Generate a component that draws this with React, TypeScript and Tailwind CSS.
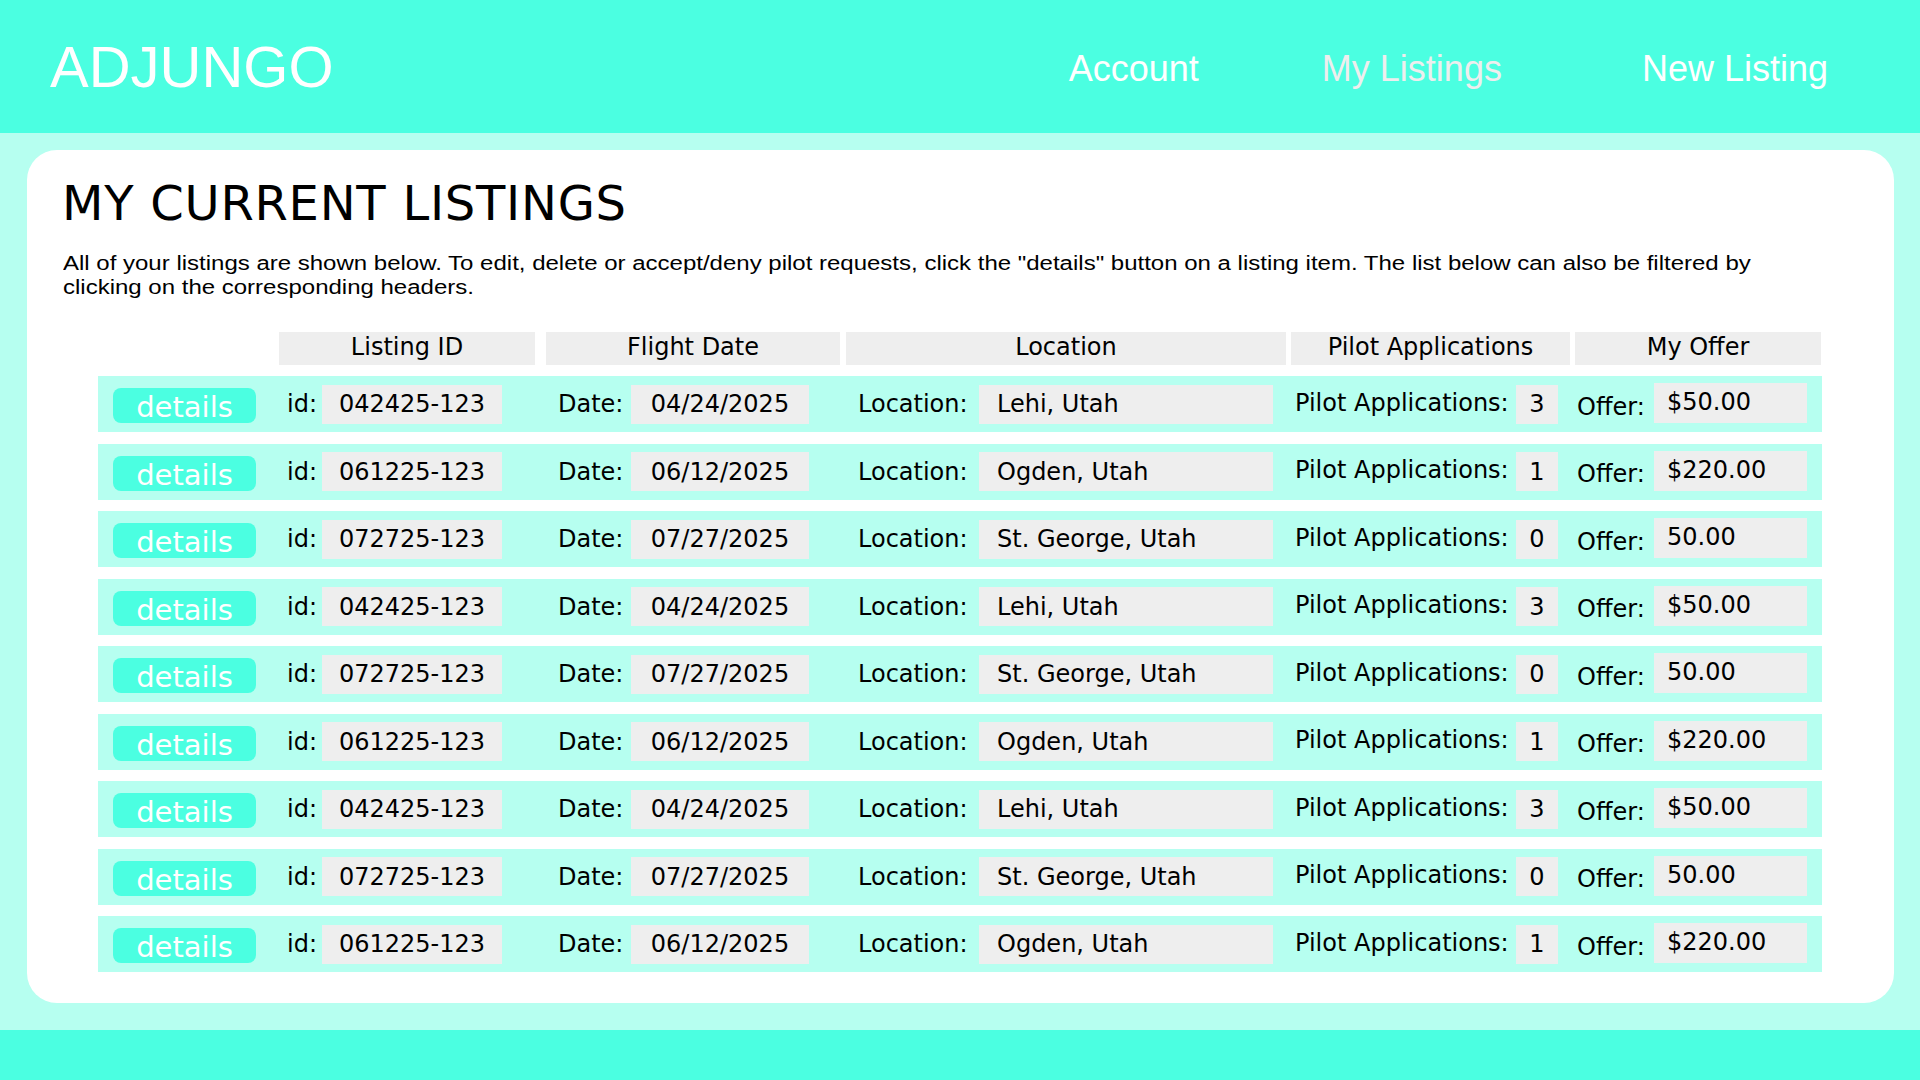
import React from "react";

type Row = { id: string; date: string; loc: string; apps: string; offer: string };

const A: Row = { id: "042425-123", date: "04/24/2025", loc: "Lehi, Utah", apps: "3", offer: "$50.00" };
const B: Row = { id: "061225-123", date: "06/12/2025", loc: "Ogden, Utah", apps: "1", offer: "$220.00" };
const C: Row = { id: "072725-123", date: "07/27/2025", loc: "St. George, Utah", apps: "0", offer: "50.00" };

const rows: Row[] = [A, B, C, A, C, B, A, C, B];

const dv = { fontFamily: '"DejaVu Sans", Verdana, sans-serif' };
const ar = { fontFamily: '"Liberation Sans", Arial, sans-serif' };

function ListingRow({ r }: { r: Row }) {
  return (
    <div className="flex h-[56px] w-[1724px] items-center bg-[#b6fff0] text-[24px] leading-[28px] text-black" style={dv}>
      <div className="ml-[15px] mt-[12px] h-[35px] w-[143px] shrink-0 cursor-pointer self-start overflow-visible rounded-[8px] bg-[#4bffe1] text-center text-[29px] leading-[38px] text-white" style={dv}>
        details
      </div>
      <span className="ml-[31px] w-[35px] whitespace-nowrap">id:</span>
      <span className="flex h-[39px] w-[180px] items-center justify-center bg-[#eeeeee] whitespace-nowrap">{r.id}</span>
      <span className="ml-[56px] w-[73px] whitespace-nowrap">Date:</span>
      <span className="flex h-[39px] w-[178px] items-center justify-center bg-[#eeeeee] whitespace-nowrap">{r.date}</span>
      <span className="ml-[49px] w-[121px] whitespace-nowrap">Location:</span>
      <span className="flex h-[39px] w-[294px] items-center bg-[#eeeeee] pl-[18px] whitespace-nowrap">{r.loc}</span>
      <span className="ml-[22px] w-[221px] whitespace-nowrap pb-[3px]">Pilot Applications:</span>
      <span className="flex h-[39px] w-[42px] items-center justify-center bg-[#eeeeee]">{r.apps}</span>
      <span className="ml-[19px] w-[77px] whitespace-nowrap pt-[5px]">Offer:</span>
      <span className="mb-[2px] flex h-[40px] w-[153px] items-center bg-[#eeeeee] pl-[13px] pb-[2px] whitespace-nowrap">{r.offer}</span>
    </div>
  );
}

export default function App() {
  const headers: { label: string; w: string; ml: string }[] = [
    { label: "Listing ID", w: "w-[256px]", ml: "ml-[181px]" },
    { label: "Flight Date", w: "w-[294px]", ml: "ml-[11px]" },
    { label: "Location", w: "w-[440px]", ml: "ml-[6px]" },
    { label: "Pilot Applications", w: "w-[279px]", ml: "ml-[5px]" },
    { label: "My Offer", w: "w-[246px]", ml: "ml-[5px]" },
  ];
  return (
    <div className="flex h-[1080px] w-[1920px] flex-col overflow-hidden bg-[#b6fff0]" style={ar}>
      <header className="flex h-[133px] shrink-0 items-center bg-[#4bffe1] pl-[50px] pr-[92px] text-white">
        <div className="text-[58px] leading-none" style={ar}>ADJUNGO</div>
        <nav className="ml-auto flex items-center pt-[5px] text-[36px] leading-none" style={ar}>
          <span className="text-white">Account</span>
          <span className="ml-[123px] text-[#eeeeee]">My Listings</span>
          <span className="ml-[140px] text-white">New Listing</span>
        </nav>
      </header>
      <main className="flex-1 px-[27px] pt-[17px]">
        <section className="h-[853px] w-[1867px] rounded-[30px] bg-white pt-[25px]">
          <h1 className="ml-[35px] text-[48px] font-normal leading-[56px] tracking-[0.75px] text-black" style={dv}>
            MY CURRENT LISTINGS
          </h1>
          <p className="ml-[36px] mt-[20px] w-[1450px] origin-left scale-x-[1.2] whitespace-nowrap text-[20px] leading-[24px] text-black" style={ar}>
            All of your listings are shown below. To edit, delete or accept/deny pilot requests, click the "details" button on a listing item. The list below can also be filtered by
            <br />
            clicking on the corresponding headers.
          </p>
          <div className="ml-[71px] mt-[33px] flex h-[33px] text-[24px] leading-[30px] text-black" style={dv}>
            {headers.map((h) => (
              <div key={h.label} className={`${h.w} ${h.ml} flex h-[33px] justify-center bg-[#eeeeee] whitespace-nowrap`}>
                {h.label}
              </div>
            ))}
          </div>
          <div className="ml-[71px] mt-[11px] flex flex-col gap-[11.5px]">
            {rows.map((r, i) => (
              <ListingRow key={i} r={r} />
            ))}
          </div>
        </section>
      </main>
      <footer className="h-[50px] shrink-0 bg-[#4bffe1]" />
    </div>
  );
}
